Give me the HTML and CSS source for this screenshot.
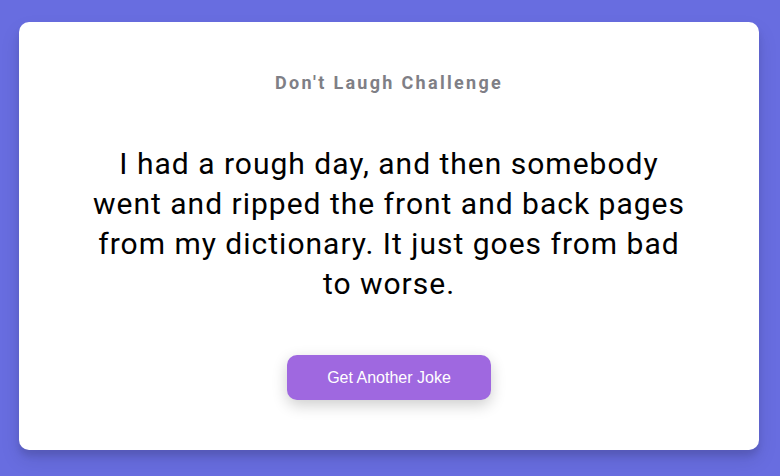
FILE: index.html
```html
<!DOCTYPE html>
<html lang="en">
<head>
<meta charset="utf-8">
<title>Don't Laugh Challenge</title>
<link rel="stylesheet" href="styles.css">
</head>
<body>
<div class="card">
  <h3 class="title">Don't Laugh Challenge</h3>
  <div class="joke">I had a rough day, and then somebody went and ripped the front and back pages from my dictionary. It just goes from bad to worse.</div>
  <button class="btn">Get Another Joke</button>
</div>
</body>
</html>
```
FILE: styles.css
```css
* { box-sizing: border-box; }
html, body { margin: 0; padding: 0; }
body {
  background: #686de0;
  font-family: Roboto, "Liberation Sans", sans-serif;
  height: 100vh;
  padding: 22px 0 0 19px;
  overflow: hidden;
}
.card {
  background: #fff;
  border-radius: 10px;
  box-shadow: 0 10px 20px rgba(0, 0, 0, 0.1), 0 6px 6px rgba(0, 0, 0, 0.1);
  width: 740px;
  padding: 50px 70px;
  display: flex;
  flex-direction: column;
  align-items: center;
  text-align: center;
}
.title {
  margin: 0 0 51px;
  font-size: 18px;
  font-weight: 700;
  letter-spacing: 2.3px;
  color: #7f7f86;
  line-height: 21px;
}
.joke {
  font-size: 30px;
  line-height: 40px;
  letter-spacing: 1px;
  color: #000;
  margin: 0 0 51px;
}
.btn {
  background: #9f68e0;
  color: #fff;
  border: 0;
  border-radius: 10px;
  box-shadow: 0 5px 15px rgba(0, 0, 0, 0.2);
  font-family: "Liberation Sans", Arial, sans-serif;
  font-size: 16px;
  padding: 14px 40px;
  width: 204px;
  height: 45px;
  cursor: pointer;
}
```
